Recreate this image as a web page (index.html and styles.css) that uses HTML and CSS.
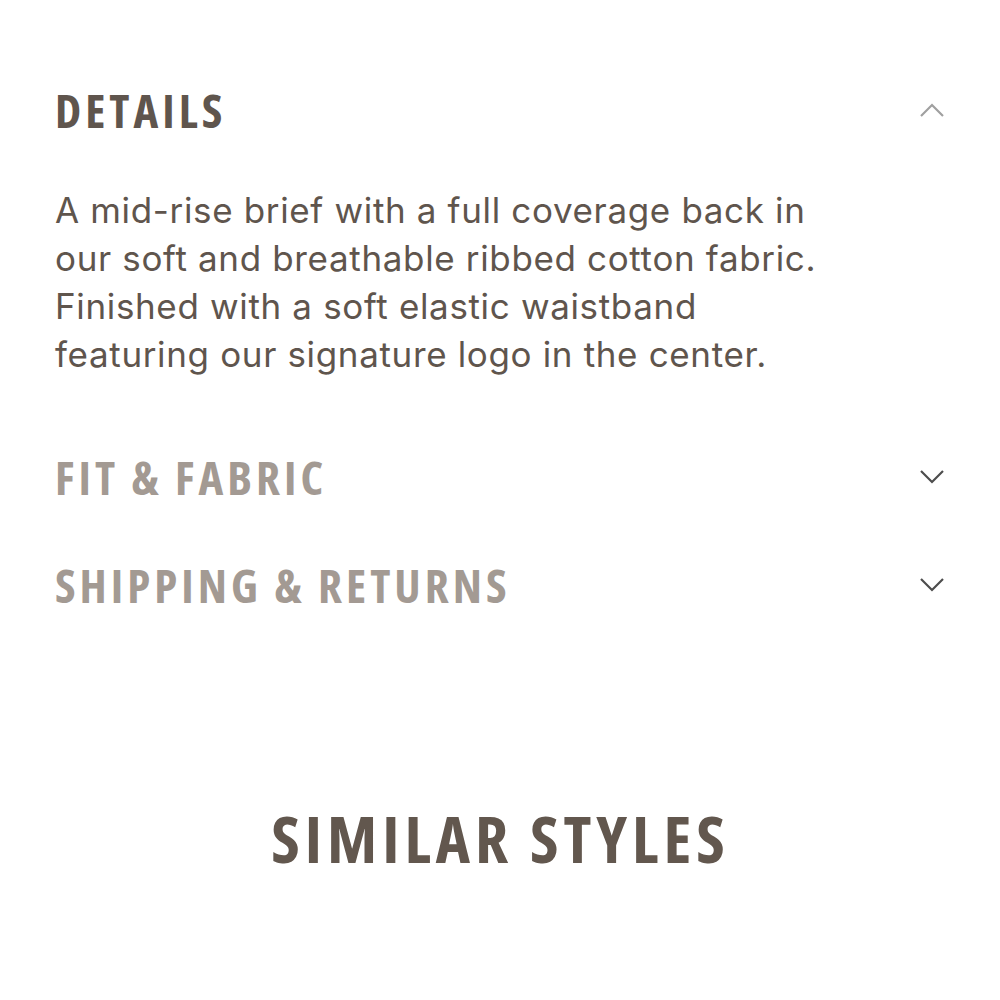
FILE: index.html
```html
<!DOCTYPE html>
<html lang="en">
  <head>
    <meta charset="UTF-8" />
    <title>Product details</title>
    <link rel="stylesheet" href="styles.css">
  </head>
  <body>
    <div class="container">
      <div class="accordion">
        <div class="acc-item open">
          <div class="acc-head">
            <h2>DETAILS</h2>
            <svg class="chevron" viewBox="0 0 28 16" width="28" height="16">
              <path d="M3 14 L14 3 L25 14" />
            </svg>
          </div>
          <p class="acc-body">
            A mid-rise brief with a full coverage back in<br />
            our soft and breathable ribbed cotton fabric.<br />
            Finished with a soft elastic waistband<br />
            featuring our signature logo in the center.
          </p>
        </div>

        <div class="acc-item">
          <div class="acc-head">
            <h2>FIT &amp; FABRIC</h2>
            <svg class="chevron dark" viewBox="0 0 28 16" width="28" height="16">
              <path d="M3 2 L14 13 L25 2" />
            </svg>
          </div>
        </div>

        <div class="acc-item">
          <div class="acc-head">
            <h2>SHIPPING &amp; RETURNS</h2>
            <svg class="chevron dark" viewBox="0 0 28 16" width="28" height="16">
              <path d="M3 2 L14 13 L25 2" />
            </svg>
          </div>
        </div>
      </div>

      <h1 class="similar">SIMILAR STYLES</h1>
    </div>
  </body>
</html>
```

FILE: styles.css
```css
body {
  margin: 0;
  background: #fff;
  font-family: "Liberation Sans", Arial, sans-serif;
}

.container {
  padding: 80px 54px 0 55px;
}

.acc-head {
  display: flex;
  justify-content: space-between;
  align-items: center;
  height: 60px;
}

.acc-item {
  margin-bottom: 48px;
}

.acc-item.open {
  margin-bottom: 69px;
}

h2 {
  margin: 0;
  font-family: "Open Sans", sans-serif;
  font-stretch: 80%;
  font-weight: bold;
  font-size: 47px;
  letter-spacing: 4px;
  color: #a39a93;
}

.open h2 {
  color: #5f554d;
}

.chevron {
  fill: none;
  stroke: #a0a0a0;
  stroke-width: 2.2;
}

.chevron.dark {
  stroke: #4d4d4d;
}

.acc-body {
  margin: 46px 0 0;
  font-family: "Inter", sans-serif;
  font-size: 35px;
  line-height: 48px;
  letter-spacing: 0.65px;
  color: #5f554d;
}

.similar {
  margin: 179px 0 0;
  text-align: center;
  font-family: "Open Sans", sans-serif;
  font-stretch: 80%;
  font-weight: bold;
  font-size: 65px;
  letter-spacing: 5px;
  color: #62574e;
}
```
